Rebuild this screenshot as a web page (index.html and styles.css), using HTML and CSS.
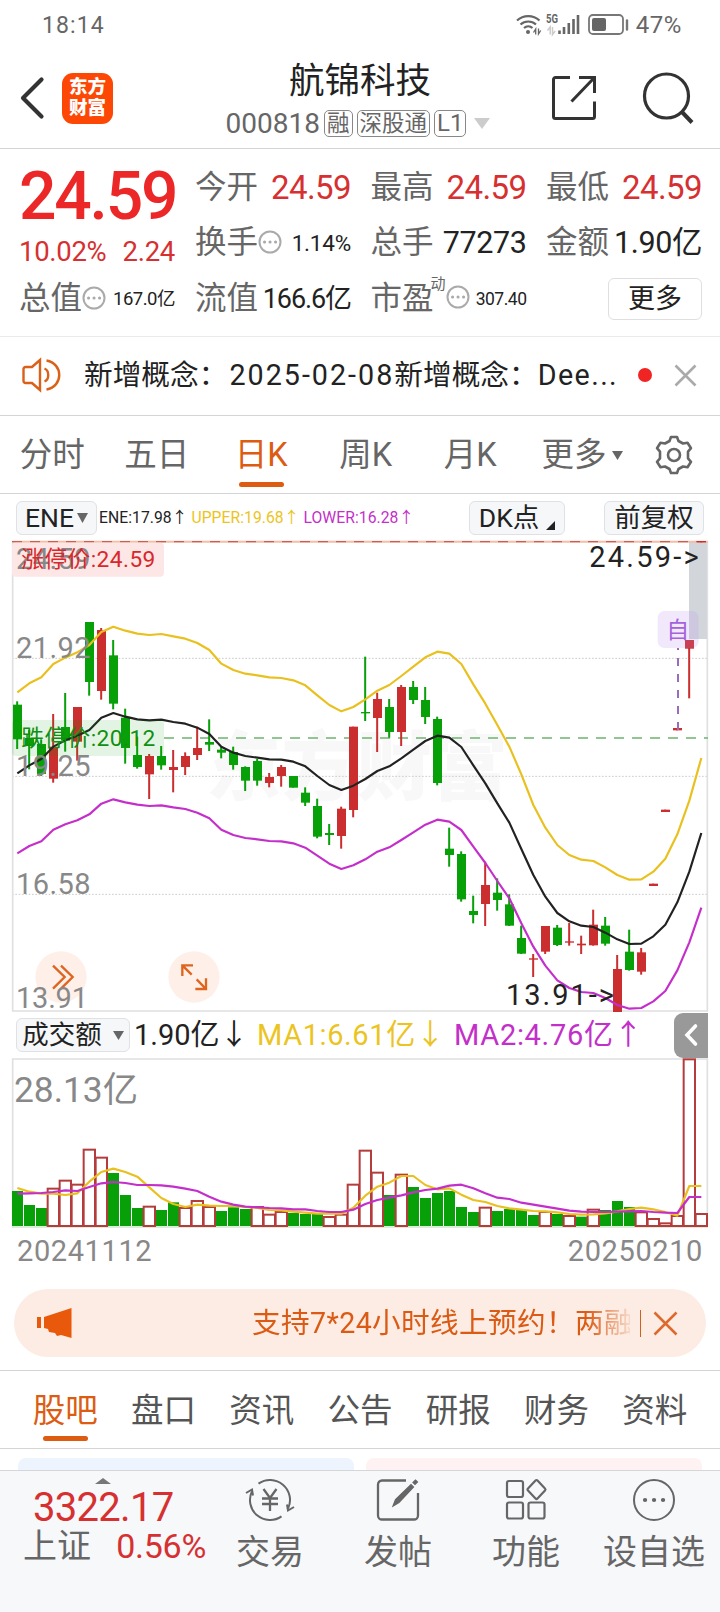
FILE: index.html
```
<!DOCTYPE html>
<html lang="zh-CN">
<head>
    <meta charset="UTF-8">
    <meta name="viewport" content="width=device-width, initial-scale=1.0">
    <title>航锦科技 000818</title>
    <link rel="stylesheet" href="styles.css">
</head>
<body>
    <div class="status-bar">
        <span class="clock">18:14</span>
        <div class="status-icons">
            <svg width="148" height="24" viewBox="0 0 148 24">
                <g fill="none" stroke="#666" stroke-width="2.2">
                    <path d="M1 8.500a16.500 16.500 0 0 1 22.500 0"/>
                    <path d="M4.500 12.500a11.500 11.500 0 0 1 15.500 0"/>
                    <path d="M8 16a6.500 6.500 0 0 1 8.500 0"/>
                </g>
                <circle cx="12" cy="20" r="2" fill="#666"/>
                <path d="M17.500 20.500l2.200-3.500v5.500M22.500 16.500v5.500l2.200-3.500" fill="none" stroke="#666" stroke-width="1.300"/>
                <text x="30" y="11" class="net" textLength="12" lengthAdjust="spacingAndGlyphs">5G</text>
                <path d="M31.500 18.500l2.700-3.500v7.500M36.500 15v7.500l2.700-3.500" fill="none" stroke="#ccc" stroke-width="1.500"/>
                <path d="M43.500 22v-3.500M48 22v-7M52.800 22v-11M57.500 22v-15M62 22v-19" stroke="#666" stroke-width="2.600"/>
                <rect x="73" y="3" width="34" height="19" rx="4" fill="none" stroke="#777" stroke-width="1.800"/>
                <rect x="76" y="6" width="14" height="13" rx="2" fill="#666"/>
                <path d="M111 8.500v9" stroke="#777" stroke-width="2.400" stroke-linecap="round"/>
            </svg>
            <span class="battery">47%</span>
        </div>
    </div>

    <header class="header">
        <div class="header-left">
            <svg width="26" height="42" viewBox="0 0 26 42"><path d="M22.500 2.500L4 21l18.500 18.500" fill="none" stroke="#333" stroke-width="4.200" stroke-linecap="round" stroke-linejoin="round"/></svg>
            <div class="logo"><span>东方</span><span>财富</span></div>
        </div>
        <div class="header-title">
            <h1>航锦科技</h1>
            <div class="code">
                <span class="code-num">000818</span>
                <span class="tag">融</span>
                <span class="tag">深股通</span>
                <span class="tag tag-l">L1</span>
                <svg class="code-arrow" width="16" height="11" viewBox="0 0 16 11"><path d="M0 0h16l-8 11z" fill="#ccc"/></svg>
            </div>
        </div>
        <div class="header-right">
            <svg width="46" height="46" viewBox="0 0 46 46" fill="none" stroke="#333" stroke-width="3">
                <path d="M19 2.500H4.500a2 2 0 0 0-2 2v37a2 2 0 0 0 2 2h37a2 2 0 0 0 2-2V26.500"/>
                <path d="M28 2.500h15.500V18M43 3L20.500 26.500"/>
            </svg>
            <svg width="52" height="52" viewBox="0 0 52 52" fill="none" stroke="#333" stroke-width="3.200">
                <circle cx="24.500" cy="24" r="22"/>
                <path d="M39.500 39.500L50 50.500" stroke-width="4"/>
            </svg>
        </div>
    </header>

    <section class="quote">
        <div class="quote-main">
            <div class="price">24.59</div>
            <div class="change"><span>10.02%</span><span>2.24</span></div>
            <div class="stat">
                <span class="label">总值</span>
                <svg class="dots" width="24" height="24" viewBox="0 0 24 24"><circle cx="12" cy="12" r="10.500"/><path d="M6.500 12h.1M12 12h.1M17.500 12h.1"/></svg>
                <span class="value xs">167.0亿</span>
            </div>
        </div>
        <div class="quote-grid">
            <div class="stat"><span class="label">今开</span><span class="value red">24.59</span></div>
            <div class="stat"><span class="label">最高</span><span class="value red">24.59</span></div>
            <div class="stat"><span class="label">最低</span><span class="value red">24.59</span></div>
            <div class="stat">
                <span class="label">换手</span>
                <svg class="dots" width="24" height="24" viewBox="0 0 24 24"><circle cx="12" cy="12" r="10.500"/><path d="M6.500 12h.1M12 12h.1M17.500 12h.1"/></svg>
                <span class="value sm">1.14%</span>
            </div>
            <div class="stat"><span class="label">总手</span><span class="value md">77273</span></div>
            <div class="stat"><span class="label">金额</span><span class="value md">1.90亿</span></div>
            <div class="stat"><span class="label">流值</span><span class="value fl">166.6亿</span></div>
            <div class="stat">
                <span class="label">市盈</span><sup>动</sup>
                <svg class="dots" width="24" height="24" viewBox="0 0 24 24"><circle cx="12" cy="12" r="10.500"/><path d="M6.500 12h.1M12 12h.1M17.500 12h.1"/></svg>
                <span class="value pe">307.40</span>
            </div>
            <button class="more-btn">更多</button>
        </div>
    </section>

    <section class="notice">
        <svg width="40" height="34" viewBox="0 0 40 34" fill="none" stroke="#db6018" stroke-width="2.400">
            <path d="M18 2v30L10 25H3.500a2 2 0 0 1-2-2V11a2 2 0 0 1 2-2H10z"/>
            <path d="M22.500 10.500c5 2 5 11 0 13M24.500 2.500c17 3 17 26 0 29"/>
        </svg>
        <p>新增概念：<span class="date">2025-02-08</span>新增概念：<span class="cut">Dee...</span></p>
        <i class="dot"></i>
        <svg width="23" height="23" viewBox="0 0 23 23"><path d="M1.500 1.500l20 20M21.500 1.500l-20 20" stroke="#aaa" stroke-width="2.600"/></svg>
    </section>

    <nav class="k-tabs">
        <a>分时</a>
        <a>五日</a>
        <a class="active">日K</a>
        <a>周K</a>
        <a>月K</a>
        <a class="k-more">更多<svg width="11" height="9" viewBox="0 0 11 9"><path d="M0 0h11L5.500 9z" fill="#666"/></svg></a>
        <svg class="gear" width="40" height="40" viewBox="0 0 40 40" fill="none" stroke="#666" stroke-width="2.600" stroke-linejoin="round">
            <path d="M15.500 6l1.500-4h6l1.500 4 4.500 2.500 4.500-.8 3.500 5.500-3 3.500v6.600l3 3.500-3.500 5.500-4.500-.8-4.500 2.500-1.500 4h-6l-1.500-4-4.500-2.500-4.500.8L3 26.800l3-3.500v-6.600l-3-3.500 3.500-5.500 4.500.8z"/>
            <circle cx="20" cy="20" r="6"/>
        </svg>
    </nav>

    <div class="indicator">
        <button class="pill pill-ene">ENE<svg width="11" height="10" viewBox="0 0 11 10"><path d="M0 0h11L5.500 10z" fill="#666"/></svg></button>
        <div class="ene-values">
            <span>ENE:17.98↑</span>
            <span class="yellow">UPPER:19.68↑</span>
            <span class="magenta">LOWER:16.28↑</span>
        </div>
        <button class="pill pill-dk">DK点<svg width="9" height="9" viewBox="0 0 9 9"><path d="M9 0v9H0z" fill="#222"/></svg></button>
        <button class="pill pill-fq">前复权</button>
    </div>

    <!-- one viewBox unit is a third of a pixel -->
    <svg class="chart" id="price-chart" viewBox="36 33 2088 1413">
        <text x="618" y="792" class="watermark" textLength="905">东方财富</text>
        <path class="grid" d="M36 385H2124M36 739H2124M36 1093H2124"/>
        <path class="frame" d="M38 33V1443M36 1443H2124M2122 33V1443"/>
        <rect x="2067" y="36" width="54" height="291" fill="#d2d6db"/>
        <path d="M36 35H2124" stroke="#f3bda9" stroke-width="6"/>
        <path d="M36 35H2124" stroke="#c96058" stroke-width="4" stroke-dasharray="30 24"/>
        <path d="M492 624H2124" stroke="#6db36d" stroke-width="5" stroke-dasharray="30 24"/>
        <g id="candles"></g>
        <g id="price-lines" class="lines"></g>
        <rect x="1973" y="243" width="123" height="111" rx="20" fill="#b98cf0" fill-opacity=".2"/>
        <text x="1999" y="325" class="self" textLength="72">自</text>
        <path d="M2034 354V600" stroke="#9b6bbd" stroke-width="6" stroke-dasharray="24 24" stroke-dashoffset="18"/>
        <rect x="36" y="38" width="456" height="102" rx="12" fill="#fde6e6"/>
        <rect x="36" y="570" width="456" height="108" rx="12" fill="#0c9a0c" fill-opacity=".11"/>
        <circle cx="183" cy="1341" r="77" fill="#fef0e8"/>
        <circle cx="582" cy="1341" r="77" fill="#fef0e8"/>
        <g fill="none" stroke="#de641f" stroke-width="7">
            <path d="M159 1307l35 34-35 35M183 1307l35 34-35 35"/>
            <path d="M547 1338v-32h32M547 1306l28 28M618 1345v32h-32M618 1377l-28-29"/>
        </g>
        <g class="axis">
            <text x="48" y="118" textLength="224">24.59</text>
            <text x="48" y="385" textLength="224">21.92</text>
            <text x="48" y="739" textLength="224">19.25</text>
            <text x="48" y="1093" textLength="224">16.58</text>
            <text x="48" y="1435" textLength="216">13.91</text>
        </g>
        <text x="64" y="110" class="limit up" textLength="402">涨停价:24.59</text>
        <text x="64" y="647" class="limit down" textLength="402">跌停价:20.12</text>
        <text x="1768" y="112" class="extreme" textLength="328">24.59-&gt;</text>
        <text x="1518" y="1426" class="extreme" textLength="324">13.91-&gt;</text>
    </svg>

    <div class="turnover">
        <button class="pill pill-vol">成交额<svg width="11" height="9" viewBox="0 0 11 9"><path d="M0 0h11L5.500 9z" fill="#666"/></svg></button>
        <span class="t-now">1.90亿↓</span>
        <span class="t-ma1 yellow">MA1:6.61亿↓</span>
        <span class="t-ma2 magenta">MA2:4.76亿↑</span>
        <div class="handle"><svg width="14" height="22" viewBox="0 0 14 22"><path d="M11.500 2L3 11l8.500 9" fill="none" stroke="#fff" stroke-width="3.600" stroke-linecap="round"/></svg></div>
    </div>

    <svg class="chart volume" id="volume-chart" viewBox="36 24 2088 510">
        <path class="frame" d="M36 27H2124M38 27V531M2122 27V531"/>
        <path d="M36 531H2124" stroke="#cfe6cd" stroke-width="5"/>
        <g id="bars"></g>
        <g id="volume-lines" class="lines"></g>
        <text x="42" y="155" class="vol-max" textLength="372">28.13亿</text>
    </svg>
    <div class="dates"><span>20241112</span><span>20250210</span></div>

    <div class="banner">
        <svg width="36" height="30" viewBox="0 0 36 30"><path d="M0 9h4v11H0zM7 9L34.500 0v30L24 27l-4 1-2-3-6-1-1-3-4-1z" fill="#e9590c"/></svg>
        <div class="marquee">支持7*24小时线上预约！两融</div>
        <i class="bar"></i>
        <svg width="25" height="25" viewBox="0 0 25 25"><path d="M1.500 1.500l22 22M23.500 1.500l-22 22" stroke="#dc6a2c" stroke-width="2.500"/></svg>
    </div>

    <nav class="info-tabs">
        <a class="active">股吧</a>
        <a>盘口</a>
        <a>资讯</a>
        <a>公告</a>
        <a>研报</a>
        <a>财务</a>
        <a>资料</a>
    </nav>

    <div class="cards">
        <div class="card blue"></div>
        <div class="card pink"></div>
    </div>

    <footer class="bottom-nav">
        <div class="index">
            <svg width="16" height="6" viewBox="0 0 16 6"><path d="M0 6h16L8 0z" fill="#777"/></svg>
            <div class="index-value">3322.17</div>
            <div class="index-row"><span class="index-name">上证</span><span class="index-pct">0.56%</span></div>
        </div>
        <a>
            <svg width="50" height="44" viewBox="0 0 50 44" fill="none" stroke="#666" stroke-width="2">
                <path d="M13.500 5.600A20 20 0 0 1 43.100 30.500M36.500 38.400A20 20 0 0 1 6.900 13.500"/>
                <path d="M1 15l6-3.500 1 6M49 29l-6 3.500-1-6"/>
                <path d="M18.500 11l6.500 9 6.500-9M17 20.500h16M17 26h16M25 20v13" stroke-width="2.300"/>
            </svg>
            <span>交易</span>
        </a>
        <a>
            <svg width="44" height="44" viewBox="0 0 44 44" fill="none" stroke="#666" stroke-width="2.300">
                <path d="M30 2.500H6a4 4 0 0 0-4 4v31a4 4 0 0 0 4 4h32a4 4 0 0 0 4-4V15"/>
                <path d="M17 28l2.500-6.500L35 6.500l2.500 2.500L23 24.500zM37 4.500l2.500-2.500 2 2L39 6.500z" fill="#666" stroke-width="1.200"/>
            </svg>
            <span>发帖</span>
        </a>
        <a>
            <svg width="44" height="44" viewBox="0 0 44 44" fill="none" stroke="#666" stroke-width="2.200">
                <rect x="3" y="3" width="16" height="16" rx="2"/>
                <rect x="3" y="24.500" width="16" height="16" rx="2"/>
                <rect x="24.500" y="24.500" width="16" height="16" rx="2"/>
                <path d="M31.500 2.500q1-1 2 0l7.500 8q1 1 0 2l-7.500 8q-1 1-2 0L24 12.500q-1-1 0-2z"/>
            </svg>
            <span>功能</span>
        </a>
        <a>
            <svg width="44" height="44" viewBox="0 0 44 44" fill="none" stroke="#666" stroke-width="2">
                <circle cx="22" cy="22" r="20"/>
                <path d="M13 22h.1M22 22h.1M31 22h.1" stroke-width="4.200" stroke-linecap="round"/>
            </svg>
            <span>设自选</span>
        </a>
    </footer>

    <script src="chart.js"></script>
</body>
</html>
```
FILE: styles.css
```
* {
    box-sizing: border-box;
}

body {
    margin: 0;
    width: 720px;
    height: 1612px;
    overflow: hidden;
    background: #fff;
    color: #222;
    font-family: Roboto, "Noto Sans CJK SC", sans-serif;
}

svg {
    display: block;
    flex-shrink: 0;
    overflow: visible;
}

button {
    font-family: inherit;
    color: #222;
    padding: 0;
}

.red { color: #d63031; }
.yellow { color: #ecc422; }
.magenta { color: #c32fc9; }

/* status bar */
.status-bar {
    display: flex;
    justify-content: space-between;
    height: 48px;
    padding: 12px 38px 0 42px;
    color: #666;
    font-size: 23px;
    line-height: 27px;
}
.clock {
    letter-spacing: 1.1px;
}
.battery {
    font-size: 24px;
    letter-spacing: .6px;
}
.status-icons {
    display: flex;
}
.status-icons svg {
    margin-right: -28px;
}
.net {
    font-size: 12px;
    font-weight: 700;
    fill: #666;
}

/* header */
.header {
    display: flex;
    height: 101px;
    border-bottom: 1px solid #d4d4d4;
}
.header-left {
    display: flex;
    align-items: center;
    gap: 17px;
    width: 180px;
    padding-left: 19px;
}
.logo {
    display: flex;
    flex-direction: column;
    justify-content: center;
    width: 51px;
    height: 51px;
    border-radius: 11px;
    background: #fd4705;
    color: #fff;
    font-size: 18.5px;
    font-weight: 900;
    line-height: 21px;
    text-align: center;
}
.header-title {
    flex: 1;
    display: flex;
    flex-direction: column;
    align-items: center;
}
.header-title h1 {
    margin: 12px 0 0;
    font-size: 35.5px;
    font-weight: 400;
    line-height: 43px;
}
.code {
    display: flex;
    align-items: center;
    height: 40px;
    margin: 0 0 0 -4px;
    color: #666;
    font-size: 28px;
}
.code-num {
    margin-right: 4px;
}
.tag {
    height: 27px;
    margin-right: 4px;
    padding: 0 2px;
    border: 1px solid #888;
    border-radius: 5px;
    font-size: 22.5px;
    line-height: 25px;
}
.tag-l {
    padding: 0 2px;
    font-size: 24px;
}
.code-arrow {
    margin-left: 4px;
}
.header-right {
    display: flex;
    align-items: center;
    justify-content: flex-end;
    gap: 45px;
    width: 180px;
    padding-right: 26px;
}

/* quote */
.quote {
    display: flex;
    gap: 20px;
    height: 188px;
    padding: 0 18px 0 19px;
    border-bottom: 1px solid #ebebeb;
}
.quote-main {
    width: 156px;
}
.price {
    height: 87px;
    padding-top: 7px;
    color: #ec2727;
    font-size: 66px;
    font-weight: 500;
    line-height: 82px;
    letter-spacing: -2.2px;
    white-space: nowrap;
}
.change {
    display: flex;
    justify-content: space-between;
    height: 36px;
    color: #d63031;
    font-size: 27.5px;
    line-height: 32px;
    letter-spacing: -.3px;
}
.quote-main .stat {
    height: 54px;
}
.quote-grid {
    flex: 1;
    display: grid;
    grid-template-columns: repeat(3, 156px);
    grid-template-rows: repeat(3, 55.5px);
    justify-content: space-between;
    padding-top: 11px;
}
.stat {
    display: flex;
    align-items: center;
    white-space: nowrap;
}
.label {
    color: #666;
    font-size: 31.5px;
    line-height: 40px;
}
.stat sup {
    align-self: flex-start;
    margin: 3px 0 0 -3px;
    color: #666;
    font-size: 15px;
    line-height: 20px;
}
.dots {
    fill: none;
    stroke: #aaa;
    stroke-width: 2;
    margin-top: -3px;
}
.dots path {
    stroke-width: 3;
    stroke-linecap: round;
}
.value {
    margin-left: auto;
    font-size: 33px;
    line-height: 40px;
    letter-spacing: -.6px;
}
.value.md {
    font-size: 30.5px;
    letter-spacing: -.4px;
}
.value.fl {
    font-size: 27px;
    letter-spacing: -1.1px;
}
.value.sm {
    font-size: 22.5px;
    letter-spacing: -.2px;
}
.value.xs {
    font-size: 18.5px;
    letter-spacing: -.5px;
}
.value.pe {
    font-size: 17.5px;
    letter-spacing: -.5px;
}
.more-btn {
    justify-self: end;
    align-self: center;
    width: 94px;
    height: 42px;
    border: 1px solid #dfdfdf;
    border-radius: 6px;
    background: #fff;
    font-size: 27px;
    line-height: 34px;
}

/* notice */
.notice {
    display: flex;
    align-items: center;
    height: 79px;
    padding: 0 23px 2px 22px;
    border-bottom: 1px solid #d4d4d4;
}
.notice p {
    width: 537px;
    margin: 0 0 0 22px;
    font-size: 28.7px;
    line-height: 40px;
    white-space: nowrap;
}
.notice .date {
    margin-left: 2px;
    letter-spacing: 2px;
}
.notice .cut {
    letter-spacing: 1.4px;
}
.dot {
    width: 14px;
    height: 14px;
    margin: 0 auto 0 17px;
    border-radius: 50%;
    background: #f12424;
}

/* period tabs */
.k-tabs {
    display: flex;
    align-items: center;
    height: 78px;
    padding: 0 26px 0 0;
    border-bottom: 1px solid #d4d4d4;
}
.k-tabs a {
    width: 104.5px;
    color: #666;
    font-size: 32.5px;
    line-height: 77px;
    text-align: center;
    padding-top: 2px;
}
.k-tabs .k-more {
    display: flex;
    align-items: center;
    gap: 5px;
    width: auto;
    margin-left: 19px;
}
.gear {
    margin-left: auto;
}
.k-tabs .active,
.info-tabs .active {
    position: relative;
    color: #dc5c12;
}
.active::after {
    content: "";
    position: absolute;
    left: 50%;
    bottom: 7px;
    width: 45px;
    height: 5px;
    margin-left: -22px;
    border-radius: 3px;
    background: #dc5c12;
}

/* indicator row */
.indicator {
    display: flex;
    align-items: center;
    height: 47px;
    padding: 0 16px;
}
.pill {
    display: flex;
    align-items: center;
    justify-content: center;
    height: 34px;
    border: 1px solid #dfe1e5;
    border-radius: 6px;
    background: #f6f7f9;
    font-size: 26.5px;
    line-height: 32px;
}
.pill-ene {
    width: 81px;
    gap: 3px;
}
.pill-dk {
    width: 96px;
    gap: 7px;
    margin-left: auto;
}
.pill-dk svg {
    margin-top: 16px;
}
.pill-fq {
    width: 100px;
    margin-left: 39px;
}
.ene-values {
    display: flex;
    gap: 4px;
    margin-left: 2px;
    font-size: 15.7px;
    line-height: 20px;
    letter-spacing: .05px;
}

/* charts */
.chart {
    width: 696px;
    height: 471px;
    margin-left: 12px;
}
.chart.volume {
    height: 170px;
}
.grid {
    fill: none;
    stroke: #ccc;
    stroke-width: 3;
    stroke-dasharray: 5 5;
}
.frame {
    fill: none;
    stroke: #e0e0e0;
    stroke-width: 5;
}
.watermark {
    font-size: 225px;
    font-weight: 900;
    fill: #f8f8f8;
}
.axis {
    font-size: 87px;
    fill: #888;
}
.limit {
    font-size: 68px;
}
.up { fill: #d8282b; }
.down { fill: #10900f; }
.extreme {
    font-size: 87px;
    fill: #222;
}
.self {
    font-size: 69px;
    fill: #a463dd;
}
.vol-max {
    font-size: 106px;
    fill: #888;
}
.lines path {
    fill: none;
    stroke-width: 6.5;
    stroke-linejoin: round;
}

/* turnover row */
.turnover {
    display: flex;
    align-items: center;
    height: 46px;
    padding: 0 12px 0 16px;
    font-size: 29px;
    line-height: 40px;
    white-space: nowrap;
}
.pill-vol {
    width: 114px;
    gap: 11px;
}
.t-now {
    width: 123px;
    margin-left: 4px;
}
.t-ma1 {
    width: 197px;
    letter-spacing: .6px;
}
.t-ma2 {
    letter-spacing: .7px;
}
.handle {
    display: flex;
    align-items: center;
    justify-content: center;
    width: 34px;
    height: 45px;
    margin-left: auto;
    border-radius: 9px 0 0 9px;
    background: #999;
}
.dates {
    display: flex;
    justify-content: space-between;
    height: 61px;
    padding: 3px 17px 0;
    color: #888;
    font-size: 29px;
    line-height: 40px;
    letter-spacing: .6px;
}

/* promo banner */
.banner {
    display: flex;
    align-items: center;
    height: 68px;
    margin: 0 14px 13px;
    padding: 0 28px 0 23px;
    border-radius: 34px;
    background: #fcece3;
    color: #db5a14;
}
.marquee {
    width: 378px;
    margin-left: auto;
    overflow: hidden;
    font-size: 28.6px;
    line-height: 40px;
    letter-spacing: .4px;
    white-space: nowrap;
    -webkit-mask-image: linear-gradient(90deg, #000 335px, transparent 384px);
    mask-image: linear-gradient(90deg, #000 335px, transparent 384px);
}
.bar {
    width: 1px;
    height: 27px;
    margin: 0 12px 0 10px;
    background: #d0601c;
}

/* info tabs */
.info-tabs {
    display: flex;
    height: 79px;
    padding: 0 16px;
    border-top: 1px solid #d4d4d4;
    border-bottom: 1px solid #d4d4d4;
}
.info-tabs a {
    flex: 1;
    padding-top: 2px;
    color: #555;
    font-size: 32.5px;
    line-height: 76px;
    text-align: center;
}
.cards {
    display: flex;
    gap: 12px;
    height: 21px;
    padding: 9px 18px 0;
}
.card {
    flex: 1;
    border-radius: 8px 8px 0 0;
}
.blue { background: #edf4fd; }
.pink { background: #fef2f2; }

/* bottom nav */
.bottom-nav {
    display: flex;
    height: 142px;
    padding-right: 2px;
    border-top: 1px solid #d4d6da;
    background: #f7f8fa;
    color: #666;
}
.index {
    width: 206px;
    padding: 7px 0 0 23px;
}
.index > svg {
    margin-left: 72px;
}
.index-value {
    margin: 4px 0 0 10px;
    color: #d63031;
    font-size: 40px;
    line-height: 40px;
    letter-spacing: -.7px;
}
.index-row {
    display: flex;
    align-items: center;
    justify-content: space-between;
    line-height: 36px;
}
.index-name {
    font-size: 34px;
}
.index-pct {
    color: #d63031;
    font-size: 34px;
    letter-spacing: -.3px;
}
.bottom-nav a {
    flex: 1;
    display: flex;
    flex-direction: column;
    align-items: center;
    padding-top: 7px;
    font-size: 34px;
    line-height: 44px;
    white-space: nowrap;
}
.bottom-nav a span {
    margin-top: 8px;
}
```
FILE: chart.js
```
const NS = 'http://www.w3.org/2000/svg';
const FIRST = 52;
const STEP = 36;
const RED = '#cb2e2e';
const GREEN = '#08a008';

// wick top, wick bottom, body top, body bottom, colour
const candles = [
    [514, 657, 524, 628, 'g'], [600, 718, 624, 648, 'g'], [628, 738, 642, 732, 'g'], [552, 758, 650, 746, 'r'],
    [489, 665, 591, 632, 'g'], [531, 692, 531, 635, 'r'], [276, 497, 276, 456, 'g'], [294, 509, 300, 483, 'r'],
    [330, 538, 376, 521, 'g'], [536, 701, 563, 654, 'g'], [620, 716, 675, 711, 'g'], [672, 807, 678, 733, 'r'],
    [648, 719, 678, 706, 'g'], [660, 787, 711, 720, 'r'], [667, 735, 678, 711, 'r'], [590, 690, 654, 675, 'r'],
    [568, 663, 636, 644, 'g'], [650, 685, 659, 668, 'g'], [650, 719, 666, 705, 'g'], [709, 783, 711, 752, 'g'],
    [687, 767, 693, 752, 'g'], [729, 772, 741, 759, 'r'], [705, 770, 711, 738, 'r'], [738, 773, 738, 773, 'g'],
    [772, 828, 788, 818, 'g'], [806, 925, 828, 920, 'g'], [882, 945, 909, 915, 'g'], [830, 956, 836, 918, 'r'],
    [590, 862, 590, 840, 'r'], [380, 573, 546, 550, 'g'], [488, 666, 507, 564, 'r'], [507, 623, 531, 606, 'g'],
    [465, 648, 471, 606, 'r'], [453, 522, 471, 510, 'g'], [471, 582, 510, 561, 'g'], [560, 766, 567, 759, 'g'],
    [893, 1010, 956, 975, 'g'], [964, 1115, 972, 1108, 'g'], [1097, 1180, 1143, 1155, 'g'], [995, 1188, 1065, 1122, 'r'],
    [1045, 1142, 1088, 1110, 'g'], [1093, 1188, 1123, 1187, 'g'], [1187, 1272, 1224, 1271, 'g'], [1272, 1341, 1285, 1289, 'r'],
    [1188, 1272, 1188, 1265, 'r'], [1185, 1248, 1193, 1245, 'g'], [1179, 1247, 1234, 1238, 'r'], [1217, 1272, 1241, 1246, 'r'],
    [1139, 1247, 1184, 1246, 'r'], [1161, 1247, 1187, 1241, 'g'], [1275, 1446, 1317, 1446, 'r'], [1199, 1322, 1265, 1320, 'g'],
    [1254, 1334, 1267, 1325, 'r'], [1061, 1068, 1061, 1068, 'r'], [839, 846, 839, 846, 'r'], [594, 601, 594, 601, 'r'],
    [330, 505, 330, 356, 'r'], [33, 37, 33, 37, 'r']
];

const upper = [487, 460, 442, 402, 383, 367, 345, 306, 290, 302, 311, 315, 312, 319, 326, 339, 360, 401, 420, 431,
    436, 442, 444, 451, 466, 496, 525, 544, 531, 508, 482, 465, 438, 410, 382, 365, 371, 402, 463, 521, 585, 650,
    733, 825, 893, 945, 975, 989, 993, 1012, 1035, 1049, 1048, 1025, 986, 913, 812, 684];
const middle = [730, 706, 687, 650, 631, 617, 600, 563, 549, 560, 568, 571, 569, 576, 581, 593, 612, 650, 668, 678,
    683, 688, 689, 695, 709, 738, 765, 780, 767, 747, 723, 709, 685, 659, 633, 617, 623, 651, 706, 760, 820, 878,
    957, 1035, 1100, 1149, 1174, 1187, 1191, 1208, 1228, 1242, 1241, 1219, 1184, 1117, 1025, 909];
const lower = [970, 948, 934, 899, 883, 871, 853, 821, 808, 817, 824, 828, 826, 832, 837, 848, 865, 899, 915, 924,
    928, 933, 934, 940, 953, 977, 1001, 1017, 1006, 988, 965, 952, 930, 907, 884, 869, 875, 900, 950, 999, 1053, 1105,
    1180, 1250, 1307, 1351, 1374, 1386, 1389, 1404, 1425, 1436, 1434, 1414, 1383, 1321, 1237, 1133];

const bars = [
    'g423', 'g465', 'g474', 'r416', 'r392', 'r404', 'r299', 'r323', 'g369', 'g435', 'g474', 'r470', 'g480', 'g457', 'r474',
    'r453', 'r471', 'g483', 'g472', 'g477', 'r471', 'r494', 'r486', 'g489', 'g492', 'g492', 'r501', 'r494', 'r404', 'r302',
    'r368', 'g435', 'r374', 'g411', 'g444', 'g429', 'g423', 'g471', 'g486', 'r473', 'g483', 'g477', 'g480', 'g495', 'r486',
    'g492', 'r498', 'g500', 'r479', 'g480', 'g453', 'g471', 'r487', 'r507', 'r520', 'r498', 'r28', 'r492'
];
const ma1 = [414, 425, 431, 431, 435, 430, 395, 366, 356, 366, 380, 412, 444, 462, 471, 464, 467, 468, 468, 471,
    474, 480, 481, 485, 488, 491, 490, 491, 473, 437, 410, 398, 378, 378, 405, 418, 415, 434, 450, 456, 468, 475,
    479, 483, 484, 487, 492, 494, 493, 490, 484, 477, 473, 478, 486, 497, 408, 408];
const ma2 = [431, 430, 429, 426, 421, 423, 411, 400, 396, 399, 405, 405, 406, 410, 416, 423, 440, 455, 464, 470,
    472, 474, 475, 478, 478, 483, 486, 486, 479, 462, 450, 443, 436, 427, 420, 416, 407, 404, 415, 430, 443, 447,
    458, 464, 470, 476, 482, 485, 486, 486, 485, 484, 483, 486, 488, 489, 441, 441];

function add(parent, name, attrs) {
    const el = document.createElementNS(NS, name);
    for (const key in attrs) el.setAttribute(key, attrs[key]);
    parent.appendChild(el);
}

function line(parent, points, color) {
    const d = points.map((y, i) => `${i ? 'L' : 'M'}${FIRST + i * STEP} ${y}`).join('');
    add(parent, 'path', { d: d, stroke: color });
}

const candleGroup = document.getElementById('candles');
candles.forEach(([high, low, top, bottom, c], i) => {
    const x = FIRST + i * STEP;
    const fill = c === 'r' ? RED : GREEN;
    add(candleGroup, 'rect', { x: x - 3.5, y: high, width: 6, height: low - high, fill: fill });
    add(candleGroup, 'rect', { x: x - 13, y: top, width: 27, height: bottom - top, fill: fill });
});

const priceLines = document.getElementById('price-lines');
line(priceLines, upper, '#e9c01e');
line(priceLines, middle, '#222');
line(priceLines, lower, '#c42fcb');

const barGroup = document.getElementById('bars');
bars.forEach((bar, i) => {
    const x = FIRST + i * STEP;
    const top = Number(bar.slice(1));
    if (bar[0] === 'g') {
        add(barGroup, 'rect', { x: x - 16, y: top, width: 33, height: 528 - top, fill: GREEN });
    } else {
        add(barGroup, 'rect', { x: x - 17, y: top, width: 34, height: 528 - top, fill: '#fff', stroke: '#b43c3c', 'stroke-width': 6 });
    }
});

const volumeLines = document.getElementById('volume-lines');
line(volumeLines, ma1, '#e9c01e');
line(volumeLines, ma2, '#c42fcb');
```
